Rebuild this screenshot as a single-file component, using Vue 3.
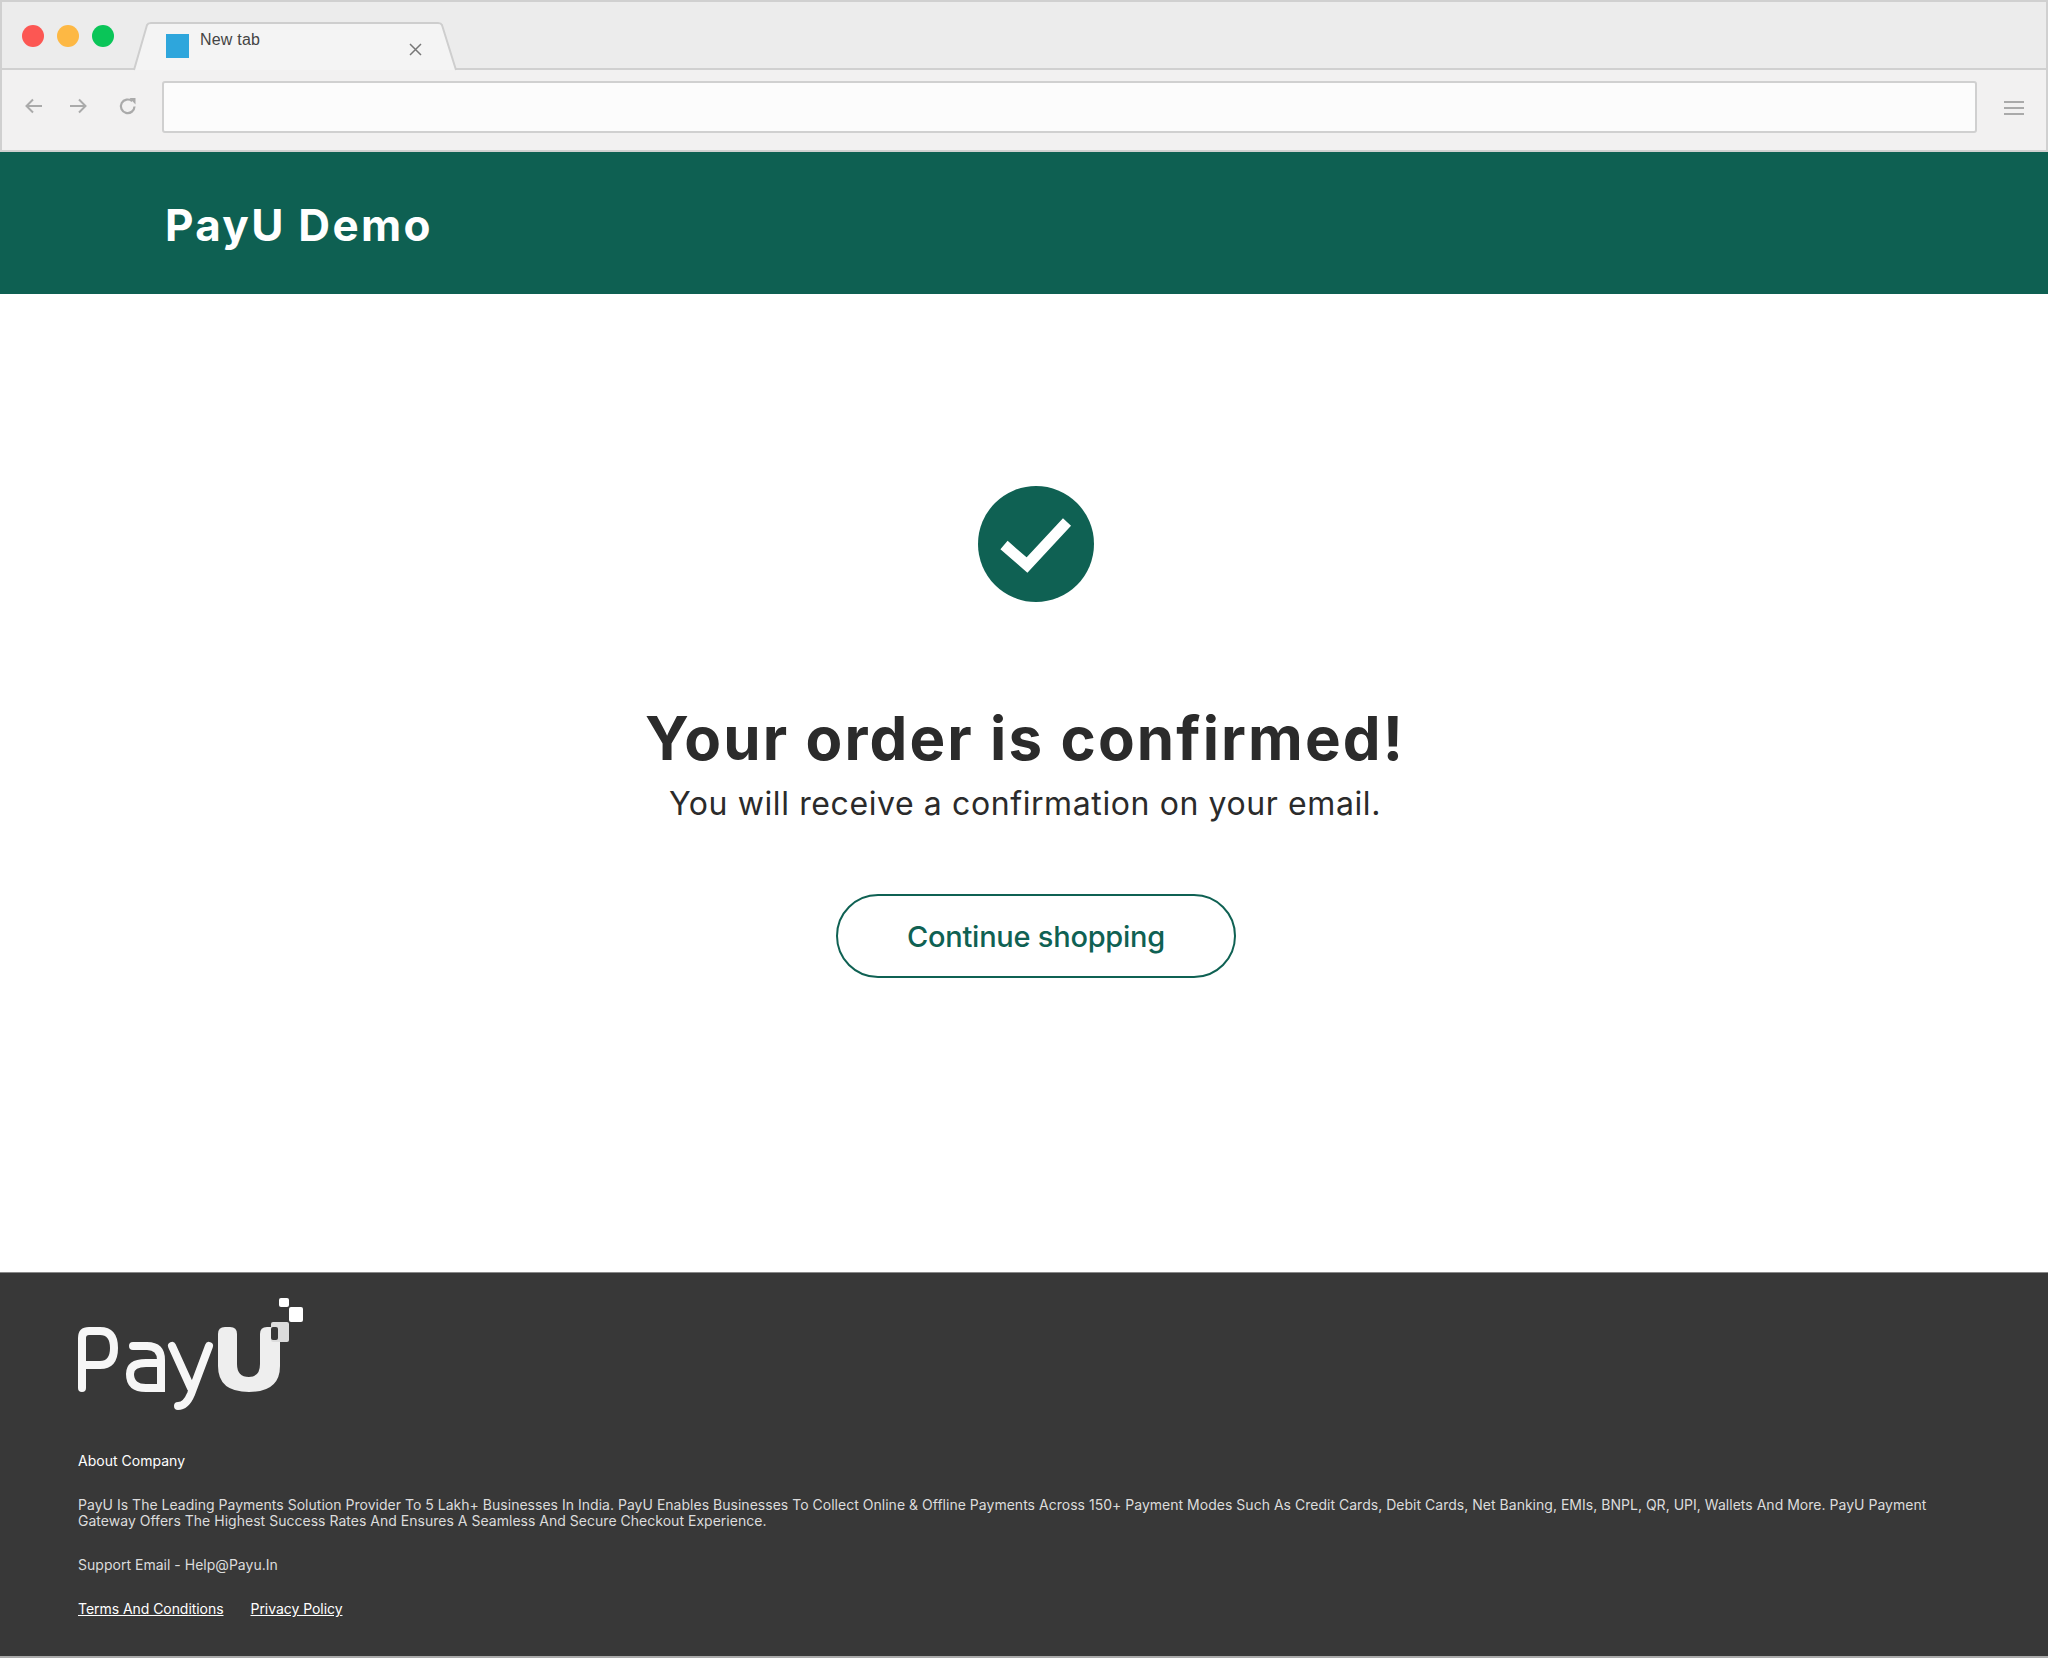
<template>
  <div class="page">
    <div class="chrome">
      <div class="tabbar">
        <div class="lights"><i class="red"></i><i class="amber"></i><i class="green"></i></div>
        <div class="tab">
          <svg class="tab-shape" width="324" height="49" viewBox="0 0 324 49"><path d="M1 48 L14 3 Q15 1 18 1 L305 1 Q308 1 309 3 L323 48" fill="#f4f4f4" stroke="#cecece" stroke-width="2"/></svg>
          <span class="favicon"></span>
          <span class="tab-title">New tab</span>
          <svg class="tab-x" width="13" height="13" viewBox="0 0 13 13"><path d="M1 1 L12 12 M12 1 L1 12" stroke="#777" stroke-width="1.5"/></svg>
        </div>
      </div>
      <div class="toolbar">
        <svg width="20" height="20" viewBox="0 0 20 20" class="nav"><path d="M18 9 H3 M9 2.5 L2.5 9 L9 15.5" fill="none" stroke="#aaa" stroke-width="2"/></svg>
        <svg width="20" height="20" viewBox="0 0 20 20" class="nav"><path d="M2 9 H17 M11 2.5 L17.5 9 L11 15.5" fill="none" stroke="#aaa" stroke-width="2"/></svg>
        <svg width="20" height="20" viewBox="0 0 20 20" class="nav reload"><path d="M16.5 9.5 A6.8 6.8 0 1 1 14.2 4.2" fill="none" stroke="#aaa" stroke-width="2.2"/><path d="M11.5 1 L17.5 1 L17.5 7.5 Z" fill="#aaa"/></svg>
        <div class="url"></div>
        <div class="menu"><i></i><i></i><i></i></div>
      </div>
    </div>
    <header class="brand">PayU Demo</header>
    <main class="content">
      <svg class="tick" width="116" height="116" viewBox="0 0 116 116"><circle cx="58" cy="58" r="58" fill="#0f6153"/><path d="M26 59 L49 79 L89 36" fill="none" stroke="#fff" stroke-width="11"/></svg>
      <h1>Your order is confirmed!</h1>
      <p class="sub">You will receive a confirmation on your email.</p>
      <button class="shop">Continue shopping</button>
    </main>
    <footer class="foot">
      <svg class="logo" width="232" height="116" viewBox="0 0 232 116">
        <path d="M4 92 V42 Q4 35 11 35 H22 Q36 35 36 52 Q36 69 22 69 H4" fill="none" stroke="#f6f6f6" stroke-width="8" stroke-linecap="round"/>
        <path d="M55 50 H69 Q83 50 83 64 V92 H68 Q52 92 52 78 Q52 67 68 67 H83" fill="none" stroke="#f6f6f6" stroke-width="8" stroke-linecap="round"/>
        <path d="M94 50 L113 92 M131 50 L113 98 Q108 110 100 110" fill="none" stroke="#f6f6f6" stroke-width="8" stroke-linecap="round"/>
        <path d="M140 38 Q140 31 147 31 H152 Q159 31 159 38 V68 Q159 81 171 81 Q182 81 182 68 V38 Q182 31 189 31 H202 V70 Q202 96 171 96 Q140 96 140 70 Z" fill="#eeeeee"/>
        <rect x="201" y="2" width="10" height="9" rx="2" fill="#fff"/>
        <rect x="211" y="11" width="14" height="15" rx="2" fill="#fff"/>
        <rect x="193" y="26" width="18" height="20" rx="2" fill="#dcdcdc"/>
        <rect x="193" y="31" width="7" height="13" rx="2" fill="#383838"/>
      </svg>
      <p class="about">About Company</p>
      <p class="blurb">PayU Is The Leading Payments Solution Provider To 5 Lakh+ Businesses In India. PayU Enables Businesses To Collect Online &amp; Offline Payments Across 150+ Payment Modes Such As Credit Cards, Debit Cards, Net Banking, EMIs, BNPL, QR, UPI, Wallets And More. PayU Payment Gateway Offers The Highest Success Rates And Ensures A Seamless And Secure Checkout Experience.</p>
      <p class="support">Support Email - Help@Payu.In</p>
      <div class="links"><a>Terms And Conditions</a><a>Privacy Policy</a></div>
    </footer>
  </div>
</template>

<script setup>
</script>

<style>
html, body { margin: 0; background: #fff; }
</style>

<style scoped>
.page {
  width: 2048px;
  height: 1658px;
  display: flex;
  flex-direction: column;
  font-family: "Inter", "Liberation Sans", sans-serif;
  overflow: hidden;
}
.chrome {
  height: 152px;
  flex: none;
  background: #f2f1f1;
  border: 2px solid #d0d0d0;
  box-sizing: border-box;
}
.tabbar {
  height: 68px;
  display: flex;
  padding-left: 20px;
  background: #ececec;
  border-bottom: 2px solid #d0d0d0;
  box-sizing: border-box;
}
.lights { display: flex; gap: 13px; padding-top: 23px; }
.lights i { width: 22px; height: 22px; border-radius: 50%; display: block; }
.red { background: #fc5753; }
.amber { background: #fdb844; }
.green { background: #0ac558; }
.tab {
  position: relative;
  margin-left: 19px;
  margin-top: 20px;
  width: 324px;
  height: 49px;
  display: flex;
  align-items: flex-start;
}
.tab-shape { position: absolute; left: 0; top: 0; }
.favicon {
  position: relative;
  width: 23px;
  height: 24px;
  margin-left: 33px;
  margin-top: 12px;
  background: #2ea6dc;
}
.tab-title {
  position: relative;
  margin-left: 11px;
  margin-top: 9px;
  font: 16px/18px "Liberation Sans", sans-serif;
  letter-spacing: 0.2px;
  color: #444;
}
.tab-x { position: absolute; left: 276px; top: 21px; }
.toolbar {
  display: flex;
  align-items: center;
  height: 80px;
  padding: 0 22px 6px 22px;
  box-sizing: border-box;
}
.nav { margin-right: 24px; flex: none; }
.reload { margin-left: 6px; }
.url {
  flex: 1;
  height: 52px;
  background: #fcfcfc;
  border: 2px solid #d0d0d0;
  border-radius: 3px;
  box-sizing: border-box;
}
.menu { margin: 2px 0 0 27px; display: flex; flex-direction: column; gap: 4px; }
.menu i { display: block; width: 20px; height: 2px; background: #aaa; }
.brand {
  height: 142px;
  flex: none;
  background: #0e6052;
  color: #fff;
  font-size: 44px;
  font-weight: 700;
  letter-spacing: 2.3px;
  padding: 4px 0 0 165px;
  display: flex;
  align-items: center;
  box-sizing: border-box;
}
.content {
  flex: 1;
  display: flex;
  flex-direction: column;
  align-items: center;
  padding-top: 192px;
}
.tick { margin-left: 24px; }
h1 {
  margin: 100px 0 0 2px;
  font-size: 60px;
  line-height: 72px;
  font-weight: 700;
  color: #2b2b2b;
  letter-spacing: 2.1px;
}
.sub {
  margin: 8px 0 0 2px;
  font-size: 32px;
  line-height: 44px;
  color: #2b2b2b;
  letter-spacing: 0.6px;
}
.shop {
  margin: 68px 0 0 24px;
  width: 400px;
  height: 84px;
  background: #fff;
  border: 2px solid #0f6153;
  border-radius: 42px;
  color: #0f6153;
  font: 500 29px "Inter", sans-serif;
  letter-spacing: -0.25px;
  padding-left: 6px;
}
.foot {
  height: 386px;
  flex: none;
  background: #383838;
  color: #dcdcdc;
  padding: 23px 78px 0;
  border-top: 1px solid #888;
  border-bottom: 2px solid #aaa;
  box-sizing: border-box;
  font-size: 14px;
  line-height: 16px;
  letter-spacing: 0.02px;
}
.logo { display: block; }
.foot p { margin: 0; }
.about { margin-top: 41px !important; color: #fff; }
.blurb { margin-top: 28px !important; }
.support { margin-top: 28px !important; }
.links { margin-top: 28px; display: flex; gap: 27px; color: #fff; }
.links a { text-decoration: underline; letter-spacing: -0.05px; }
</style>
